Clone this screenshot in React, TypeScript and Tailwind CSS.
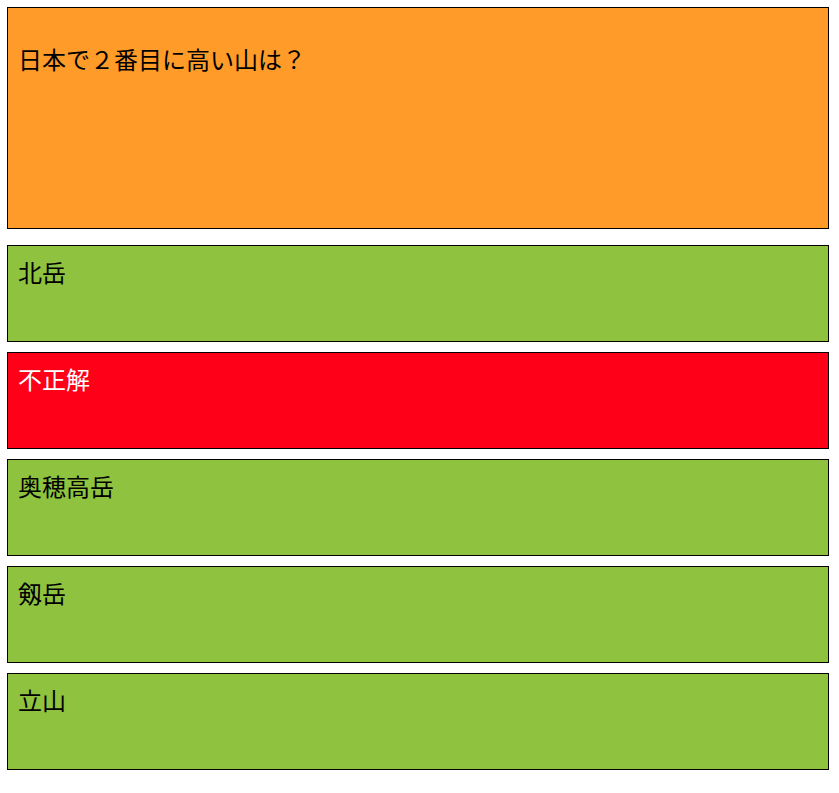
const choices = [
  { label: "北岳", wrong: false },
  { label: "不正解", wrong: true },
  { label: "奥穂高岳", wrong: false },
  { label: "剱岳", wrong: false },
  { label: "立山", wrong: false },
];

export default function App() {
  return (
    <div
      className="min-h-[793px] bg-white pt-[7px] pl-[7px]"
      style={{ fontFamily: '"Noto Sans CJK JP", "Noto Sans", sans-serif' }}
    >
      <div className="w-[822px]">
        <div className="h-[222px] border border-black bg-[#ff9b28] pl-[10px] pt-[34px] text-[24px] leading-[33px] text-black">
          日本で２番目に高い山は？
        </div>

        <div className="mt-4 flex flex-col gap-[10px]">
          {choices.map((c) => (
            <div
              key={c.label}
              className={
                c.wrong
                  ? "h-[97px] border border-black bg-[#ff0019] pl-[10px] pt-[9px] text-[24px] leading-[33px] text-white"
                  : "h-[97px] border border-black bg-[#8fc33f] pl-[10px] pt-[9px] text-[24px] leading-[33px] text-black"
              }
            >
              {c.label}
            </div>
          ))}
        </div>
      </div>
    </div>
  );
}
